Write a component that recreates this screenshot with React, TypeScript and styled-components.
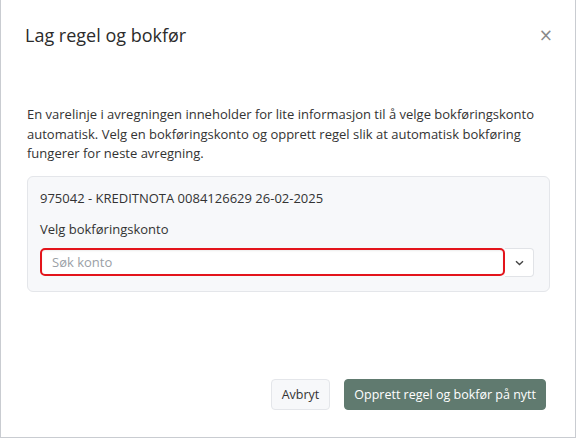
import React from "react";
import styled, { createGlobalStyle } from "styled-components";

const GlobalStyle = createGlobalStyle`
  html, body {
    margin: 0;
    padding: 0;
    background: #ffffff;
  }
  body {
    font-family: "Open Sans", "Noto Sans", sans-serif;
    color: #333333;
  }
`;

const Page = styled.div`
  width: 577px;
  height: 439px;
  background: #ffffff;
  overflow: hidden;
`;

const Modal = styled.div`
  width: 576px;
  height: 438px;
  box-sizing: border-box;
  border: 1px solid #c9ccd1;
  border-top: none;
  background: #ffffff;
  display: flex;
  flex-direction: column;
`;

const Header = styled.header`
  display: flex;
  align-items: center;
  justify-content: space-between;
  padding: 23px 22px 0 24px;
  height: 47px;
  box-sizing: border-box;
`;

const Title = styled.h2`
  margin: 0;
  font-size: 18px;
  font-weight: 400;
  color: #2b2b2b;
  line-height: 24px;
`;

const Close = styled.button`
  border: none;
  background: none;
  padding: 0;
  color: #8a8a8a;
  font-size: 17px;
  line-height: 1;
  cursor: pointer;
  font-family: "DejaVu Sans", sans-serif;
`;

const Body = styled.div`
  padding: 58px 25px 0 26px;
  display: flex;
  flex-direction: column;
  gap: 12.5px;
  flex: 1;
`;

const Intro = styled.p`
  margin: 0;
  font-size: 13px;
  line-height: 19.5px;
  color: #333333;
`;

const Card = styled.section`
  background: #f7f8fa;
  border: 1px solid #e4e6ea;
  border-radius: 6px;
  padding: 11px 15px 14px 12px;
  display: flex;
  flex-direction: column;
`;

const CardLine = styled.div`
  font-size: 13px;
  line-height: 20px;
  color: #333333;
`;

const Label = styled.label`
  font-size: 13px;
  line-height: 20px;
  color: #333333;
  margin-top: 11px;
  margin-bottom: 9px;
`;

const SelectRow = styled.div`
  display: flex;
  align-items: flex-start;
  height: 29px;
`;

const SearchInput = styled.input`
  flex: 1;
  min-width: 0;
  box-sizing: border-box;
  height: 28px;
  border: 2px solid #e3141b;
  border-radius: 5px;
  background: #ffffff;
  padding: 0 10px;
  font-family: "Open Sans", sans-serif;
  font-size: 13px;
  color: #333333;
  box-shadow: inset 0 1px 2px rgba(0, 0, 0, 0.08);
  outline: none;
  &::placeholder {
    color: #9aa0a6;
  }
`;

const DropButton = styled.button`
  width: 29px;
  height: 29px;
  box-sizing: border-box;
  border: 1px solid #e1e3e7;
  border-left: none;
  border-radius: 0 4px 4px 0;
  background: #ffffff;
  display: flex;
  align-items: center;
  justify-content: center;
  padding: 0;
  color: #444;
`;

const Footer = styled.footer`
  display: flex;
  justify-content: flex-end;
  gap: 14px;
  padding: 0 29px 27px 0;
`;

const Button = styled.button<{ $primary?: boolean }>`
  height: 31px;
  box-sizing: border-box;
  padding: 0 ${(p) => (p.$primary ? "9px" : "10px")};
  border-radius: 4px;
  font-family: "Open Sans", sans-serif;
  font-size: 12.5px;
  cursor: pointer;
  border: 1px solid ${(p) => (p.$primary ? "#607a6f" : "#e4e6ea")};
  background: ${(p) => (p.$primary ? "#607a6f" : "#f7f8fa")};
  color: ${(p) => (p.$primary ? "#ffffff" : "#333333")};
`;

const Chevron = () => (
  <svg width="9" height="6" viewBox="0 0 9 6" fill="none">
    <path d="M1 1.2 L4.5 4.5 L8 1.2" stroke="#444" strokeWidth="1.4" />
  </svg>
);

export default function App() {
  return (
    <Page>
      <GlobalStyle />
      <Modal>
        <Header>
          <Title>Lag regel og bokfør</Title>
          <Close aria-label="Lukk">×</Close>
        </Header>
        <Body>
          <Intro>
            En varelinje i avregningen inneholder for lite informasjon til å velge bokføringskonto
            automatisk. Velg en bokføringskonto og opprett regel slik at automatisk bokføring
            fungerer for neste avregning.
          </Intro>
          <Card>
            <CardLine>975042 - KREDITNOTA 0084126629 26-02-2025</CardLine>
            <Label>Velg bokføringskonto</Label>
            <SelectRow>
              <SearchInput placeholder="Søk konto" />
              <DropButton>
                <Chevron />
              </DropButton>
            </SelectRow>
          </Card>
        </Body>
        <Footer>
          <Button>Avbryt</Button>
          <Button $primary>Opprett regel og bokfør på nytt</Button>
        </Footer>
      </Modal>
    </Page>
  );
}
